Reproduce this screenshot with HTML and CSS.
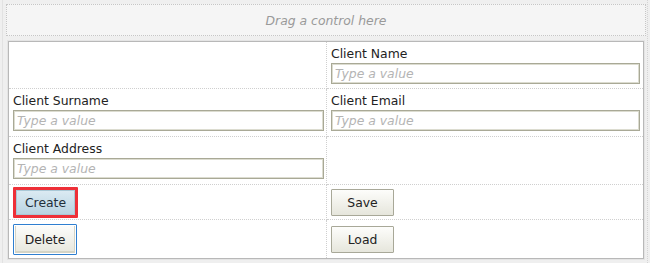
FILE: index.html
```html
<!DOCTYPE html>
<html lang="en">
<head>
    <meta charset="UTF-8">
    <title>Client Form Designer</title>
    <link rel="stylesheet" href="styles.css">
</head>
<body>
    <div class="canvas">
        <!-- Drop target for new controls -->
        <div class="dropzone">Drag a control here</div>

        <div class="form-grid">
            <div class="cell"></div>
            <div class="cell">
                <label class="field-label">Client Name</label>
                <input class="field-input" type="text" placeholder="Type a value">
            </div>

            <div class="cell">
                <label class="field-label">Client Surname</label>
                <input class="field-input" type="text" placeholder="Type a value">
            </div>
            <div class="cell">
                <label class="field-label">Client Email</label>
                <input class="field-input" type="text" placeholder="Type a value">
            </div>

            <div class="cell">
                <label class="field-label">Client Address</label>
                <input class="field-input" type="text" placeholder="Type a value">
            </div>
            <div class="cell"></div>

            <div class="cell button-cell">
                <button class="btn btn-selected">Create</button>
            </div>
            <div class="cell button-cell">
                <button class="btn">Save</button>
            </div>

            <div class="cell button-cell last-row">
                <button class="btn btn-focused">Delete</button>
            </div>
            <div class="cell button-cell last-row">
                <button class="btn">Load</button>
            </div>
        </div>
    </div>
</body>
</html>
```

FILE: styles.css
```css
body {
    margin: 0;
    background-color: #efefef;
    font-family: 'DejaVu Sans', Verdana, sans-serif;
    font-size: 12.4px;
    color: #222;
}

.canvas {
    width: 646px;
    height: 263px;
    box-sizing: border-box;
    margin-left: 2px;
    padding: 4px 1px 0 3px;
    border-left: 1px solid #e2e2e2;
    border-right: 1px dotted #d4d4d4;
}

/* Drop zone on top */
.dropzone {
    height: 32px;
    box-sizing: border-box;
    border: 1px dotted #c6c6c6;
    background-color: #f5f5f5;
    color: #9a9a9a;
    font-style: italic;
    display: flex;
    align-items: center;
    justify-content: center;
}

/* Form table */
.form-grid {
    margin: 5px 0 0 2px;
    width: 636px;
    box-sizing: border-box;
    border: 1px solid #b8b8b8;
    box-shadow: 0 0 0 1px #e4e4e4;
    background-color: #fff;
    display: grid;
    grid-template-columns: 318px 316px;
    grid-template-rows: 47px 48px 48px 35px 38px;
}

.cell {
    box-sizing: border-box;
    padding: 5px 3px 0 4px;
    border-bottom: 1px dotted #cfcfcf;
    display: flex;
    flex-direction: column;
}
.cell:nth-child(odd) {
    border-right: 1px dotted #cfcfcf;
    padding-right: 2px;
}

.field-label {
    line-height: 14px;
    margin-bottom: 2px;
    color: #222;
}

.field-input {
    height: 21px;
    box-sizing: border-box;
    border: 1px solid #a9a996;
    box-shadow: inset 0 0 0 1px #dcdcd0;
    padding: 0 3px;
    font-family: 'DejaVu Sans', Verdana, sans-serif;
    font-size: 12.4px;
    outline: none;
}
.field-input::placeholder {
    color: #b4b4b4;
    font-style: italic;
}

.button-cell {
    padding-top: 0;
    justify-content: center;
    align-items: flex-start;
}
.last-row {
    border-bottom: none;
}

.btn {
    width: 63px;
    height: 27px;
    border: 1px solid #a8a898;
    border-radius: 1px;
    background: linear-gradient(#fdfdfb, #e6e6dc);
    color: #222;
    font-family: 'DejaVu Sans', Verdana, sans-serif;
    font-size: 12.4px;
    padding: 0;
}

.btn-selected {
    width: 65px;
    height: 31px;
    border: 3px solid #ee3038;
    background: linear-gradient(#dcebf3, #b8d3e1);
    box-shadow: inset 0 0 0 1px #a9c8d6;
    color: #1f2f3a;
}

.btn-focused {
    width: 64px;
    height: 31px;
    border: 1px solid #2f7fd0;
    box-shadow: inset 0 0 0 1px #fff, inset 0 -1px 0 2px #d4d4c6;
}
```
